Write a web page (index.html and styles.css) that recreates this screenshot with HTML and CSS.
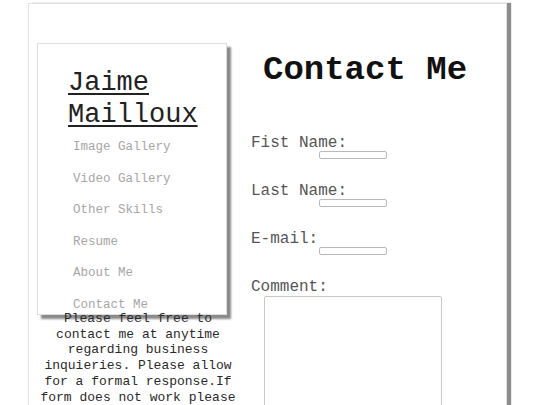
FILE: index.html
```html
<!DOCTYPE html>
<html>
<head>
<meta charset="utf-8">
<link rel="stylesheet" href="styles.css">
</head>
<body>
<div class="page">
  <div class="left">
    <div class="sidebar">
      <h1 class="name">Jaime Mailloux</h1>
      <ul class="nav">
        <li>Image Gallery</li>
        <li>Video Gallery</li>
        <li>Other Skills</li>
        <li>Resume</li>
        <li>About Me</li>
        <li>Contact Me</li>
      </ul>
    </div>
    <p class="note">Please feel free to contact me at anytime regarding business inquieries. Please allow for a formal response.If form does not work please</p>
  </div>
  <div class="right">
    <h2 class="title">Contact Me</h2>
    <form class="form">
      <div class="row"><label class="lbl">Fist Name:</label><input class="field" type="text"></div>
      <div class="row"><label class="lbl">Last Name:</label><input class="field" type="text"></div>
      <div class="row"><label class="lbl">E-mail:</label><input class="field" type="text"></div>
      <div class="row"><label class="lbl">Comment:</label><textarea class="comment"></textarea></div>
    </form>
  </div>
</div>
</body>
</html>
```
FILE: styles.css
```css
html, body {
  margin: 0;
  padding: 0;
  background: #fff;
  overflow: hidden;
}
body {
  font-family: "Liberation Mono", "Courier New", monospace;
  color: #333;
}
.page {
  margin: 3px 0 0 28px;
  width: 477px;
  height: 600px;
  border: 1px solid #e2e2e2;
  box-shadow: 4px 0 1px #8c8c8c;
  display: flex;
  background: #fff;
}
.left {
  width: 212px;
  padding-left: 8px;
  padding-top: 39px;
  flex: none;
}
.sidebar {
  width: 188px;
  height: 270px;
  border: 1px solid #dedede;
  box-shadow: 4px 4px 2px #8a8a8a;
  background: #fff;
}
.name {
  margin: 23px 0 0 30px;
  font-size: 27px;
  line-height: 32px;
  font-weight: normal;
  color: #222;
  text-decoration: underline;
  text-decoration-thickness: 2px;
  text-underline-offset: 3px;
}
.nav {
  list-style: none;
  margin: 1px 0 0 35px;
  padding: 0;
}
.nav li {
  font-size: 12.5px;
  line-height: 31.6px;
  color: #a6a6a6;
  white-space: nowrap;
}
.note {
  margin: -4px 0 0 0;
  width: 202px;
  text-align: center;
  font-size: 13px;
  line-height: 15.7px;
  color: #2a2a2a;
}
.right {
  flex: 1;
}
.title {
  margin: 46px 0 0 14px;
  font-size: 34px;
  line-height: 40px;
  font-weight: bold;
  color: #111;
}
.form {
  margin: 45px 0 0 2px;
}
.row {
  margin-bottom: 24px;
}
.lbl {
  display: block;
  font-size: 16px;
  line-height: 16px;
  color: #555;
}
.field {
  display: block;
  margin: 0 0 0 68px;
  width: 68px;
  height: 8px;
  padding: 0;
  border: 1px solid #b9b9b9;
  border-radius: 2px;
  box-sizing: border-box;
  background: #fff;
}
.comment {
  display: block;
  margin: 1px 0 0 13px;
  width: 178px;
  height: 140px;
  padding: 0;
  border: 1px solid #c8c8c8;
  border-radius: 2px;
  box-sizing: border-box;
  resize: none;
  background: #fff;
}
```
